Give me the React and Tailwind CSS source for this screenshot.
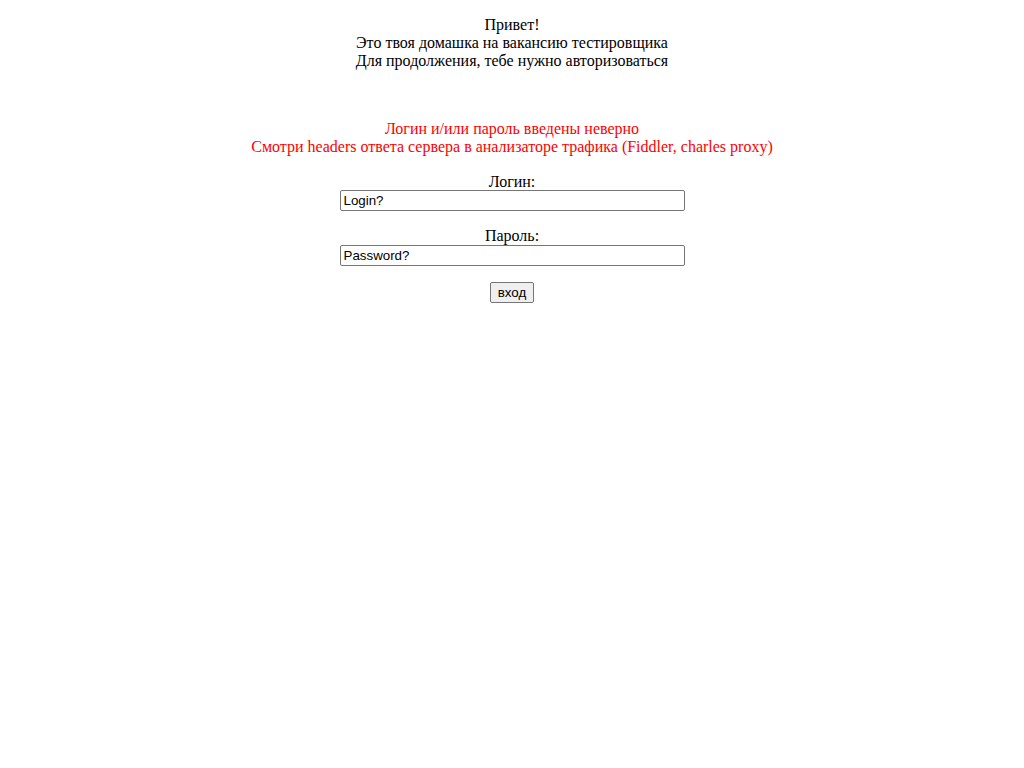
export default function App() {
  return (
    <div className="min-h-screen bg-white text-black font-['Liberation_Serif',serif] text-[16px] leading-[18px] text-center">
      <div className="pt-[16px]">
        <div>Привет!</div>
        <div>Это твоя домашка на вакансию тестировщика</div>
        <div>Для продолжения, тебе нужно авторизоваться</div>
      </div>

      {/* Error message */}
      <div className="mt-[50px] text-[#ff0000]">
        <div>Логин и/или пароль введены неверно</div>
        <div>Смотри headers ответа сервера в анализаторе трафика (Fiddler, charles proxy)</div>
      </div>

      <form className="mt-[17px] flex flex-col items-center" onSubmit={(e) => e.preventDefault()}>
        <label className="leading-[17px]">Логин:</label>
        <input
          type="text"
          defaultValue="Login?"
          className="w-[345px] h-[21px] border border-[#767676] rounded-[2px] px-[3px] font-['Liberation_Sans',sans-serif] text-[13.33px] text-black outline-none"
        />
        <label className="mt-[16px] leading-[18px]">Пароль:</label>
        <input
          type="text"
          defaultValue="Password?"
          className="w-[345px] h-[21px] border border-[#767676] rounded-[2px] px-[3px] font-['Liberation_Sans',sans-serif] text-[13.33px] text-black outline-none"
        />
        <button
          type="submit"
          className="mt-[16px] w-[44px] h-[21px] bg-[#efefef] border border-[#767676] rounded-[2px] font-['Liberation_Sans',sans-serif] text-[13.33px] leading-none text-black"
        >
          вход
        </button>
      </form>
    </div>
  );
}
